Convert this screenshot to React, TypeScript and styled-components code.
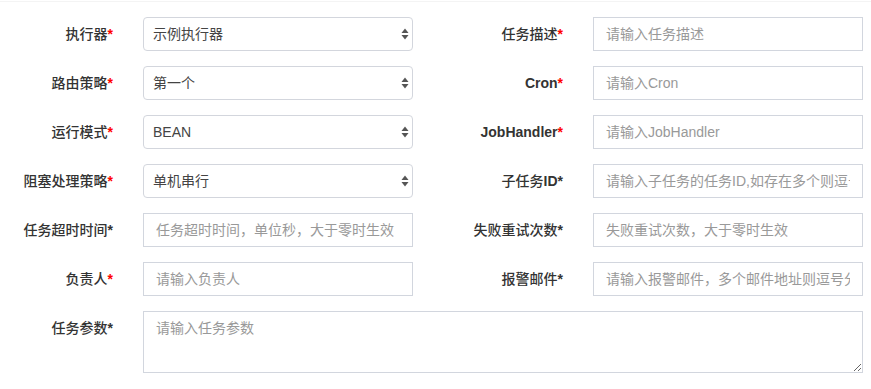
import React from 'react';
import styled, { createGlobalStyle } from 'styled-components';

const GlobalStyle = createGlobalStyle`
  html, body {
    margin: 0;
    padding: 0;
    background: #fff;
  }
  body {
    font-family: "Liberation Sans", Arial, "Noto Sans CJK SC", sans-serif;
    font-size: 14px;
    color: #333;
  }
`;

const Form = styled.form`
  margin-top: 1px;
  border-top: 1px solid #f4f4f4;
  padding-top: 15px;
  display: grid;
  grid-template-columns: 113px 270px 120px 270px;
  column-gap: 30px;
  row-gap: 15px;
  align-items: start;
`;

const Label = styled.label`
  text-align: right;
  font-weight: 500;
  line-height: 20px;
  padding-top: 7px;
  white-space: nowrap;
  color: #333;
`;

const Latin = styled.span`
  font-weight: 700;
`;

const Star = styled.span<{ $red?: boolean }>`
  font-weight: 700;
  color: ${(p) => (p.$red ? '#f00' : '#333')};
`;

const SelectWrap = styled.div`
  position: relative;
  height: 34px;
`;

const Select = styled.select`
  appearance: none;
  -webkit-appearance: none;
  width: 100%;
  height: 34px;
  box-sizing: border-box;
  border: 1px solid #d3d6dd;
  border-radius: 4px;
  background: #fff;
  padding: 0 24px 0 9px;
  font-family: inherit;
  font-size: 14px;
  color: #444;
  outline: none;
`;

const Arrow = styled.svg`
  position: absolute;
  right: 4px;
  top: 11px;
  pointer-events: none;
`;

const Input = styled.input`
  width: 100%;
  height: 34px;
  box-sizing: border-box;
  border: 1px solid #d2d6de;
  border-radius: 0;
  padding: 6px 12px;
  font-family: inherit;
  font-size: 14px;
  color: #555;
  outline: none;
  &::placeholder {
    color: #999;
  }
`;

const TextArea = styled.textarea`
  grid-column: 2 / span 3;
  height: 62px;
  box-sizing: border-box;
  border: 1px solid #d2d6de;
  border-radius: 0;
  padding: 6px 12px;
  font-family: inherit;
  font-size: 14px;
  line-height: 20px;
  color: #555;
  outline: none;
  &::placeholder {
    color: #999;
  }
`;

type Field =
  | { kind: 'select'; label: string; red: boolean; value: string }
  | { kind: 'input'; label: string; red: boolean; placeholder: string };

const rows: [Field, Field][] = [
  [
    { kind: 'select', label: '执行器', red: true, value: '示例执行器' },
    { kind: 'input', label: '任务描述', red: true, placeholder: '请输入任务描述' },
  ],
  [
    { kind: 'select', label: '路由策略', red: true, value: '第一个' },
    { kind: 'input', label: 'Cron', red: true, placeholder: '请输入Cron' },
  ],
  [
    { kind: 'select', label: '运行模式', red: true, value: 'BEAN' },
    { kind: 'input', label: 'JobHandler', red: true, placeholder: '请输入JobHandler' },
  ],
  [
    { kind: 'select', label: '阻塞处理策略', red: true, value: '单机串行' },
    { kind: 'input', label: '子任务ID', red: false, placeholder: '请输入子任务的任务ID,如存在多个则逗号分隔' },
  ],
  [
    { kind: 'input', label: '任务超时时间', red: false, placeholder: '任务超时时间，单位秒，大于零时生效' },
    { kind: 'input', label: '失败重试次数', red: false, placeholder: '失败重试次数，大于零时生效' },
  ],
  [
    { kind: 'input', label: '负责人', red: true, placeholder: '请输入负责人' },
    { kind: 'input', label: '报警邮件', red: false, placeholder: '请输入报警邮件，多个邮件地址则逗号分隔' },
  ],
];

// latin words in labels render bold, CJK in medium weight
const labelText = (text: string) =>
  text.split(/([A-Za-z]+)/).map((part, i) =>
    /[A-Za-z]/.test(part) ? <Latin key={i}>{part}</Latin> : part
  );

const SelectArrow = () => (
  <Arrow width="8" height="12" viewBox="0 0 8 12">
    <path d="M4 0.5 L7.5 5 L0.5 5 Z" fill="#555" />
    <path d="M4 11.5 L7.5 7 L0.5 7 Z" fill="#555" />
  </Arrow>
);

const renderField = (f: Field) => (
  <React.Fragment key={f.label}>
    <Label>
      {labelText(f.label)}
      <Star $red={f.red}>*</Star>
    </Label>
    {f.kind === 'select' ? (
      <SelectWrap>
        <Select defaultValue={f.value}>
          <option value={f.value}>{f.value}</option>
        </Select>
        <SelectArrow />
      </SelectWrap>
    ) : (
      <Input placeholder={f.placeholder} />
    )}
  </React.Fragment>
);

export default function App() {
  return (
    <>
      <GlobalStyle />
      <Form>
        {rows.map(([a, b]) => (
          <React.Fragment key={a.label}>
            {renderField(a)}
            {renderField(b)}
          </React.Fragment>
        ))}
        <Label>
          任务参数<Star>*</Star>
        </Label>
        <TextArea placeholder="请输入任务参数" />
      </Form>
    </>
  );
}
